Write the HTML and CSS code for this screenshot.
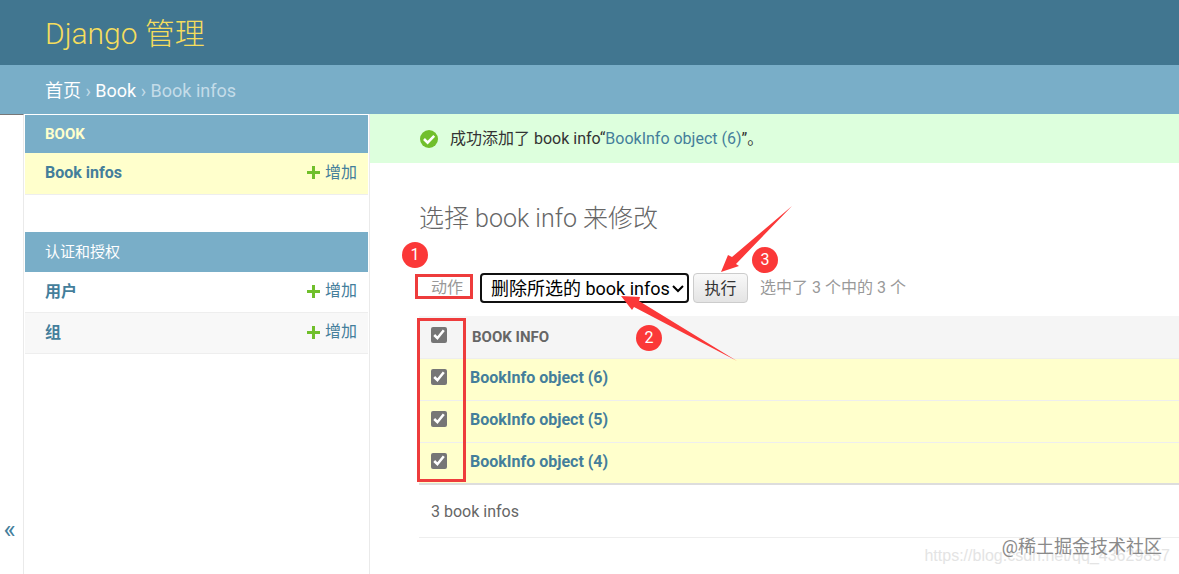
FILE: index.html
```html
<!DOCTYPE html>
<html lang="zh-hans">
  <head>
    <meta charset="utf-8" />
    <meta name="viewport" content="width=device-width,initial-scale=1.0" />
    <title>选择 book info 来修改 | Django 站点管理员</title>
    <link rel="stylesheet" href="styles.css">
  </head>
  <body>
    <svg class="symbols" aria-hidden="true">
      <symbol id="icon-add" viewBox="0 0 13 13">
        <path fill="#70bf2b" d="M5 0h3v5h5v3H8v5H5V8H0V5h5z" />
      </symbol>
    </svg>

    <header class="header">
      <h1 class="site-name"><a href="#">Django 管理</a></h1>
    </header>

    <nav class="breadcrumbs">
      <a href="#">首页</a> &rsaquo; <a href="#">Book</a> &rsaquo; Book infos
    </nav>

    <div class="main">
      <button class="toggle-nav" type="button" aria-label="切换导航">&laquo;</button>

      <nav class="sidebar">
        <table class="module">
          <caption><a href="#">BOOK</a></caption>
          <tr class="current">
            <th scope="row"><a href="#">Book infos</a></th>
            <td><a href="#" class="addlink"><svg class="add-icon"><use href="#icon-add" /></svg>增加</a></td>
          </tr>
        </table>
        <table class="module">
          <caption><a href="#">认证和授权</a></caption>
          <tr>
            <th scope="row"><a href="#">用户</a></th>
            <td><a href="#" class="addlink"><svg class="add-icon"><use href="#icon-add" /></svg>增加</a></td>
          </tr>
          <tr class="alt">
            <th scope="row"><a href="#">组</a></th>
            <td><a href="#" class="addlink"><svg class="add-icon"><use href="#icon-add" /></svg>增加</a></td>
          </tr>
        </table>
      </nav>

      <main class="content">
        <div class="message">
          <svg class="message-icon" viewBox="0 0 18 18">
            <circle cx="9" cy="9" r="9" fill="#70bf2b" />
            <path d="M4 9l3.6 3.6 6.6-6.8" fill="none" stroke="#fff" stroke-width="2.6" />
          </svg>
          <span>成功添加了 book info“<a href="#">BookInfo object (6)</a>”。</span>
        </div>

        <div class="changelist">
          <h2 class="title">选择 book info 来修改</h2>

          <form>
            <div class="actions">
              <label for="action">动作</label>
              <div class="select-wrap">
                <select id="action">
                  <option>删除所选的 book infos</option>
                </select>
                <svg class="chevron" viewBox="0 0 12 8"><path d="M1 1l5 5 5-5" fill="none" stroke="#000" stroke-width="2" /></svg>
              </div>
              <button class="run" type="button">执行</button>
              <span class="counter">选中了 3 个中的 3 个</span>
            </div>

            <table class="results">
              <thead>
                <tr>
                  <th class="check"><input type="checkbox" aria-label="全选" checked></th>
                  <th>BOOK INFO</th>
                </tr>
              </thead>
              <tbody>
                <tr>
                  <td class="check"><input type="checkbox" aria-label="BookInfo object (6)" checked></td>
                  <th scope="row"><a href="#">BookInfo object (6)</a></th>
                </tr>
                <tr>
                  <td class="check"><input type="checkbox" aria-label="BookInfo object (5)" checked></td>
                  <th scope="row"><a href="#">BookInfo object (5)</a></th>
                </tr>
                <tr>
                  <td class="check"><input type="checkbox" aria-label="BookInfo object (4)" checked></td>
                  <th scope="row"><a href="#">BookInfo object (4)</a></th>
                </tr>
              </tbody>
            </table>
            <p class="paginator">3 book infos</p>
          </form>
        </div>

        <!-- numbered steps drawn over the form -->
        <div class="frame frame-label"></div>
        <div class="frame frame-checks"></div>
        <svg class="arrows" viewBox="0 0 400 170" aria-hidden="true">
          <path fill="#fb3838" d="M351 72L358 55 362 57 422 6 366 64 369 66z" />
          <path fill="#fb3838" d="M251 96L270 97 269 101 367 161 264 107 262 110z" />
        </svg>
        <span class="step step-1">1</span>
        <span class="step step-2">2</span>
        <span class="step step-3">3</span>
      </main>
    </div>

    <span class="watermark watermark-url">https://blog.csdn.net/qq_43629857</span>
    <span class="watermark watermark-site">@稀土掘金技术社区</span>
  </body>
</html>
```
FILE: styles.css
```css
* {
  box-sizing: border-box;
}

html {
  height: 100%;
}

body {
  position: relative;
  display: flex;
  flex-direction: column;
  min-height: 100%;
  margin: 0;
  background: #fff;
  color: #333;
  font-family: Roboto, "Noto Sans CJK SC", sans-serif;
  font-size: 16px;
  line-height: 20px;
}

a {
  color: #447e9b;
  text-decoration: none;
}

table {
  width: 100%;
  border-collapse: collapse;
}

.symbols {
  position: absolute;
  width: 0;
  height: 0;
}

/* header */
.header {
  padding: 14px 45px 11px;
  background: #417690;
}

.site-name {
  margin: 0;
  font-size: 30px;
  font-weight: 300;
  line-height: 40px;
}

.site-name a {
  color: #f5dd5d;
}

.breadcrumbs {
  padding: 14px 45px 11px;
  background: #79aec8;
  color: #c4dce8;
  font-size: 18px;
  line-height: 24px;
}

.breadcrumbs a {
  color: #fff;
}

.main {
  display: flex;
  flex: 1;
}

/* sidebar */
.toggle-nav {
  display: flex;
  flex: none;
  justify-content: center;
  width: 24px;
  padding: 399px 4px 0 0;
  border: 0;
  border-top: 1px solid #777;
  border-right: 1px solid #eaeaea;
  background: #fff;
  color: #447e9b;
  font-family: inherit;
  font-size: 26px;
  line-height: 30px;
}

.sidebar {
  flex: none;
  width: 346px;
  padding: 1px 1px 0;
  border-right: 1px solid #eaeaea;
}

.module {
  margin-bottom: 37px;
}

.module caption {
  padding: 9px 20px;
  background: #79aec8;
  font-size: 15px;
  font-weight: 700;
  text-align: left;
}

.module + .module caption {
  padding: 10px 20px;
  font-weight: 400;
}

.module caption a {
  color: #fff;
}

.module:first-child caption a {
  color: #ffc;
}

.module th,
.module td {
  height: 41px;
  padding: 0 11px 0 20px;
  border-bottom: 1px solid #eee;
  text-align: left;
}

.module td {
  text-align: right;
}

.current {
  background: #ffc;
}

.alt {
  background: #f8f8f8;
}

.addlink {
  display: inline-flex;
  align-items: center;
  gap: 5px;
}

.add-icon {
  width: 13px;
  height: 13px;
}

/* content */
.content {
  position: relative;
  flex: 1;
  min-width: 0;
}

.message {
  display: flex;
  align-items: center;
  gap: 12px;
  padding: 15px 50px 14px;
  background: #dfd;
}

.message-icon {
  width: 18px;
  height: 18px;
}

.changelist {
  padding: 41px 0 0 49px;
}

.title {
  margin: 0 0 39px;
  color: #666;
  font-size: 25px;
  font-weight: 300;
  line-height: 30px;
}

.actions {
  display: flex;
  align-items: center;
  padding-left: 12px;
  margin-bottom: 13px;
  color: #999;
}

.select-wrap {
  position: relative;
  margin: 0 4px 0 17px;
}

.actions select {
  width: 209px;
  height: 30px;
  padding: 0 9px;
  border: 2px solid #101010;
  border-radius: 4px;
  appearance: none;
  background: #fff;
  color: #000;
  font-family: inherit;
  font-size: 18px;
}

.chevron {
  position: absolute;
  top: 12px;
  right: 5px;
  width: 12px;
  height: 8px;
  pointer-events: none;
}

.run {
  width: 55px;
  height: 30px;
  padding: 0 0 2px;
  border: 1px solid #ccc;
  border-radius: 4px;
  background: linear-gradient(#f8f8f8, #e4e4e4);
  color: #333;
  font-family: inherit;
  font-size: 16px;
}

.counter {
  margin-left: 12px;
}

.results {
  border-bottom: 2px solid #ddd;
}

.results th,
.results td {
  height: 42px;
  padding: 0 0 2px;
  text-align: left;
}

.results thead {
  background: #f5f5f5;
  color: #666;
}

.results thead th {
  padding: 0 0 0 2px;
  font-size: 15px;
}

.results tbody tr {
  border-top: 1px solid #eee;
  background: #ffc;
}

.results .check {
  width: 51px;
  padding: 0 0 4px 12px;
}

.results input {
  display: block;
  width: 16px;
  height: 16px;
  margin: 0;
  accent-color: #767676;
}

.paginator {
  margin: 0;
  padding: 17px 12px 15px;
  border-bottom: 1px solid #eee;
  color: #666;
}

/* steps */
.frame {
  position: absolute;
  border: 3px solid #ee3c3c;
}

.frame-label {
  top: 160px;
  left: 45px;
  width: 58px;
  height: 25px;
}

.frame-checks {
  top: 204px;
  left: 47px;
  width: 49px;
  height: 164px;
}

.arrows {
  position: absolute;
  top: 86px;
  left: 0;
  width: 400px;
  height: 170px;
  overflow: visible;
  pointer-events: none;
}

.step {
  position: absolute;
  width: 26px;
  height: 26px;
  border-radius: 50%;
  background: #fb3838;
  color: #fff;
  line-height: 26px;
  text-align: center;
}

.step-1 {
  top: 128px;
  left: 32px;
}

.step-2 {
  top: 211px;
  left: 266px;
}

.step-3 {
  top: 133px;
  left: 382px;
}

.watermark {
  position: absolute;
  white-space: nowrap;
}

.watermark-url {
  right: 9px;
  bottom: 8px;
  color: #e4e4e4;
  font-family: "Liberation Sans", sans-serif;
}

.watermark-site {
  right: 17px;
  bottom: 17px;
  color: #8a8a8a;
  font-size: 18px;
}
```
